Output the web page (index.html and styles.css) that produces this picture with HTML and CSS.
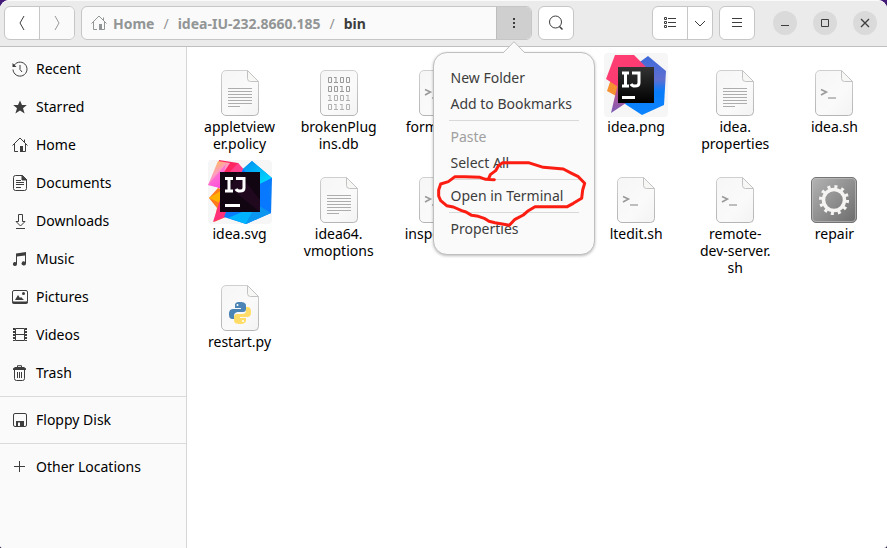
FILE: index.html
```html
<!DOCTYPE html>
<html lang="en">
<head>
<meta charset="utf-8">
<title>bin</title>
<link rel="stylesheet" href="styles.css">
</head>
<body>
<svg class="defs" aria-hidden="true">
  <defs>
    <linearGradient id="paper" x1="0" y1="0" x2="1" y2="1"><stop offset="0" stop-color="#f6f6f6"/><stop offset=".6" stop-color="#fafafa"/><stop offset="1" stop-color="#f3f3f3"/></linearGradient>
    <linearGradient id="edge" x1="0" y1="0" x2="0" y2="1"><stop offset="0" stop-color="#cfcfcf"/><stop offset="1" stop-color="#b5b5b5"/></linearGradient>
    <linearGradient id="metal" x1="0" y1="0" x2="1" y2="1"><stop offset="0" stop-color="#b4b4b4"/><stop offset="1" stop-color="#6c6c6c"/></linearGradient>
    <linearGradient id="blue" x1="0" y1="0" x2="0" y2="1"><stop offset="0" stop-color="#3f6bdb"/><stop offset=".4" stop-color="#5f6fd0"/><stop offset=".6" stop-color="#087cfa"/><stop offset="1" stop-color="#0b84ff"/></linearGradient>
    <linearGradient id="pink" x1="0" y1="0" x2="1" y2="1"><stop offset="0" stop-color="#ff3f74"/><stop offset=".5" stop-color="#fd3b72"/><stop offset="1" stop-color="#b75596"/></linearGradient>
    <linearGradient id="tile" x1="0" y1="0" x2="0" y2="1"><stop offset="0" stop-color="#333"/><stop offset="1" stop-color="#000"/></linearGradient>
    <linearGradient id="plum" x1="0" y1="0" x2="0" y2="1"><stop offset="0" stop-color="#e0507a"/><stop offset="1" stop-color="#7b5bb8"/></linearGradient>
    <linearGradient id="sun" x1="0" y1="0" x2=".6" y2="1"><stop offset="0" stop-color="#ffc72c"/><stop offset=".5" stop-color="#ff9dc0"/><stop offset="1" stop-color="#ff3fe8"/></linearGradient>
    <linearGradient id="cyan" x1="0" y1="0" x2="1" y2="1"><stop offset="0" stop-color="#008cf0"/><stop offset="1" stop-color="#00e5ff"/></linearGradient>
    <symbol id="home" viewBox="0 0 16 16"><path d="M.5 8.500 8 1l7.500 7.500M2.500 7v7.500h3.500M13.500 7v7.500h-3M12.500 2.500v3" fill="none" stroke="currentColor"/><path d="M8 9h3v6H8z" fill="currentColor"/></symbol>
    <symbol id="page" viewBox="0 0 48 48"><path d="M10 1.500h21l11.500 11.500v29.500a4 4 0 0 1-4 4h-28.500a4.500 4.500 0 0 1-4.500-4.500v-36a4.500 4.500 0 0 1 4.500-4.500z" fill="url(#paper)" stroke="url(#edge)"/><path d="M31.500 1.500v8a3 3 0 0 0 3 3h8z" fill="#f7f7f5" stroke="#c2c2c2"/></symbol>
    <symbol id="text" viewBox="0 0 48 48"><use href="#page"/><path d="M12 19.500h24M12 22.500h24M12 25.500h24M12 28.500h24M12 31.500h24M12 34.500h24M12 37.500h12" stroke="#adadad"/></symbol>
    <symbol id="shell" viewBox="0 0 48 48"><use href="#page"/><path d="m11 20.500 5.500 2.500-5.500 3" fill="none" stroke="#999" stroke-width="1.500"/><path d="M18 29h8" stroke="#aaa" stroke-width="1.500"/></symbol>
    <symbol id="zero" viewBox="0 0 4 6"><path d="M.5.5h3v5h-3z" fill="none" stroke="currentColor"/></symbol>
    <symbol id="one" viewBox="0 0 4 6"><path d="M0 .5h2.500M2 .5v5M0 5.500h4" fill="none" stroke="currentColor"/></symbol>
    <symbol id="idea" viewBox="0 0 64 64"><rect width="64" height="64" rx="4" fill="#f6f6f6"/><path d="M7 26h14v22L3 38z" fill="#f59130"/><path d="M33 11 44 3l18 15-2 34-22 10-20-13z" fill="url(#blue)"/><path d="M11 2h19l12 12-20 25L2 26z" fill="url(#pink)"/><path d="m7 60 8-34 10 22z" fill="url(#plum)"/><path d="M14 14h36v36H14z" fill="url(#tile)"/><path d="M18 20h7M18 33h7M21.500 20v13M28 20h7v10q0 3-4 3-3 0-4-2" fill="none" stroke="#fff" stroke-width="3"/><path d="M18 43h13v3H18z" fill="#fff"/></symbol>
  </defs>
</svg>
<div class="window">
  <header class="bar">
    <div class="group nav">
      <button type="button" aria-label="Back"><svg width="16" height="16"><path d="M10 1 6 8l4 7" fill="none" stroke="currentColor"/></svg></button>
      <button type="button" class="off" aria-label="Forward"><svg width="16" height="16"><path d="m6 1 4 7-4 7" fill="none" stroke="currentColor"/></svg></button>
    </div>
    <div class="group path">
      <nav class="crumbs" aria-label="Path">
        <a href="#"><svg width="16" height="16"><use href="#home"/></svg>Home</a><span>/</span><a href="#">idea-IU-232.8660.185</a><span>/</span><a href="#" class="here">bin</a>
      </nav>
      <div class="anchor">
        <button type="button" class="active" aria-label="Folder menu"><svg width="16" height="16"><path d="M7 3h2v2H7zM7 7h2v2H7zM7 11h2v2H7z" fill="currentColor"/></svg></button>
        <div class="popover">
          <svg class="tip" width="22" height="12"><path d="M0 12 11 .7 22 12" fill="#fafafa" stroke="#bfbfbf"/></svg>
          <button type="button">New Folder</button>
          <button type="button">Add to Bookmarks</button>
          <hr>
          <button type="button" disabled>Paste</button>
          <button type="button">Select All</button>
          <hr>
          <button type="button">Open in Terminal</button>
          <hr>
          <button type="button">Properties</button>
          <svg class="scribble" viewBox="45 90 459 204" width="153" height="68"><path d="M223 149 197 148 180 142 135 140 105 140 85 155 62 162 56 180 56 198 62 212 80 227 100 231 125 242 138 246 155 256 175 259 195 266 207 274 225 278 268 286 285 268 310 255 325 242 345 230 442 230 460 220 485 205 488 180 494 160 475 140 455 130 430 117 370 112 325 98 248 98 235 108 227 122 211 134 206 146"/></svg>
        </div>
      </div>
    </div>
    <div class="group"><button type="button" aria-label="Search"><svg width="16" height="16"><circle cx="7.500" cy="7" r="6" fill="none" stroke="currentColor"/><path d="m11.500 11.500 3 3" stroke="currentColor" stroke-width="1.500"/></svg></button></div>
    <div class="group view">
      <button type="button" aria-label="List view"><svg width="16" height="16"><path d="M2.500 2.500h2v2h-2zM2.500 6.500h2v2h-2zM2.500 10.500h2v2h-2zM6 3.500h8M6 7.500h8M6 11.500h8" fill="none" stroke="currentColor"/></svg></button>
      <button type="button" class="slim" aria-label="View options"><svg width="16" height="16"><path d="m3 6 5 5 5-5" fill="none" stroke="currentColor"/></svg></button>
    </div>
    <div class="group"><button type="button" aria-label="Main menu"><svg width="16" height="16"><path d="M3 3.500h10M3 7.500h10M3 11.500h10" stroke="currentColor"/></svg></button></div>
    <div class="controls">
      <button type="button" aria-label="Minimize"><svg width="16" height="16"><path d="M4 10.500h8" stroke="currentColor"/></svg></button>
      <button type="button" aria-label="Maximize"><svg width="16" height="16"><path d="M4.500 4.500h7v7h-7z" fill="none" stroke="currentColor"/></svg></button>
      <button type="button" aria-label="Close"><svg width="16" height="16"><path d="m4 4 8 8M12 4l-8 8" stroke="currentColor" stroke-width="1.300"/></svg></button>
    </div>
  </header>
  <div class="body">
    <nav class="side" aria-label="Places">
      <a href="#"><svg width="16" height="16" fill="none" stroke="currentColor"><path d="M1.500 5.500A7 7 0 1 1 1 8.500M8 4v4.500l2 2.500"/><path d="M.5 2v4h4z" fill="currentColor" stroke="none"/></svg>Recent</a>
      <a href="#"><svg width="16" height="16" fill="currentColor"><path d="m8 1.500 2 4.500h4.800L11 9.300l1.600 5.200L8 11.500l-4.600 3L5 9.300 1.200 6H6z"/></svg>Starred</a>
      <a href="#"><svg width="16" height="16"><use href="#home"/></svg>Home</a>
      <a href="#"><svg width="16" height="16" fill="none" stroke="currentColor"><path d="M3.500.5h7l4 4v9a2 2 0 0 1-2 2h-9a2 2 0 0 1-2-2v-11a2 2 0 0 1 2-2zM4 5.500h5M4 7.500h8M4 9.500h8M4 12.500h5"/><path d="M10 .5v4.500h4.500z" fill="currentColor"/></svg>Documents</a>
      <a href="#"><svg width="16" height="16" fill="none" stroke="currentColor"><path d="M6.500 1.500h4v7h2.500l-4.500 4.500-4.500-4.500h2.500zM4 15.500h9"/></svg>Downloads</a>
      <a href="#"><svg width="16" height="16" fill="currentColor"><path d="M4 2.500 14 1v11.500a2.200 2 0 1 1-1-1.700V4.500L5 5.500V13a2 2 0 1 1-1-1.700z"/></svg>Music</a>
      <a href="#"><svg width="16" height="16" fill="none" stroke="currentColor"><rect x=".5" y="1.500" width="15" height="12" rx="1.500"/><path d="M.5 13h15v.5q0 1-1 1h-13q-1 0-1-1z" fill="currentColor"/><path d="m3 11 3-5 2 3 1-1 3 3z" fill="currentColor" stroke="none"/><circle cx="11.500" cy="4.500" r="1.500" fill="currentColor" stroke="none"/></svg>Pictures</a>
      <a href="#"><svg width="16" height="16" fill="none" stroke="currentColor"><path d="M3.500 1.500h9v12h-9zM3.500 7.500h9"/><path d="M2 1v13M14 1v13" stroke-width="2" stroke-dasharray="2 1"/></svg>Videos</a>
      <a href="#"><svg width="16" height="16" fill="none" stroke="currentColor"><path d="M2.500 5v8.500a2 2 0 0 0 2 2h6a2 2 0 0 0 2-2V5M5.500 7v6M7.500 7v6M9.500 7v6M5.500 3V.7h4V3"/><path d="M1 5V3.500l2-1.500h9l2 1.500V5z" fill="currentColor" stroke="none"/></svg>Trash</a>
      <hr>
      <a href="#"><svg width="16" height="16" fill="none" stroke="currentColor"><path d="M4 14.500H3a1.500 1.500 0 0 1-1.500-1.500V3A1.500 1.500 0 0 1 3 1.500h10A1.500 1.500 0 0 1 14.500 3v10a1.500 1.500 0 0 1-1.500 1.500h-1"/><path d="M4 9h8v6H4zM6 10.500v3.500h2v-3.500z" fill="currentColor" fill-rule="evenodd" stroke="none"/></svg>Floppy Disk</a>
      <hr>
      <a href="#"><svg width="16" height="16"><path d="M2 7.500h11M7.500 2v11" stroke="currentColor"/></svg>Other Locations</a>
    </nav>
    <main>
      <ul class="files">
        <li><svg width="48" height="48"><use href="#text"/></svg><span>appletview<wbr>er.policy</span></li>
        <li><svg width="48" height="48"><rect x="5.500" y="1.500" width="37" height="45" rx="4.500" fill="url(#paper)" stroke="url(#edge)"/><g color="#999"><use href="#zero" x="13" y="8" width="4" height="6"/><use href="#one" x="19" y="8" width="4" height="6"/><use href="#zero" x="25" y="8" width="4" height="6"/><use href="#zero" x="31" y="8" width="4" height="6"/><use href="#zero" x="13" y="17" width="4" height="6"/><use href="#zero" x="19" y="17" width="4" height="6"/><use href="#one" x="25" y="17" width="4" height="6"/><use href="#zero" x="31" y="17" width="4" height="6"/></g><g color="#b0b0b0"><use href="#one" x="13" y="26" width="4" height="6"/><use href="#zero" x="19" y="26" width="4" height="6"/><use href="#zero" x="25" y="26" width="4" height="6"/><use href="#one" x="31" y="26" width="4" height="6"/><use href="#zero" x="13" y="35" width="4" height="6"/><use href="#one" x="19" y="35" width="4" height="6"/><use href="#one" x="25" y="35" width="4" height="6"/><use href="#zero" x="31" y="35" width="4" height="6"/></g></svg><span>brokenPlug<wbr>ins.db</span></li>
        <li><svg width="48" height="48"><use href="#shell"/></svg><span>format.sh</span></li>
        <li></li>
        <li><svg width="64" height="64"><use href="#idea"/></svg><span>idea.png</span></li>
        <li><svg width="48" height="48"><use href="#text"/></svg><span>idea.<wbr>properties</span></li>
        <li><svg width="48" height="48"><use href="#shell"/></svg><span>idea.sh</span></li>
        <li><svg width="64" height="64"><rect width="64" height="64" rx="4" fill="#f6f6f6"/><path d="M1 38 10 28l16 8-6 20-14 6 3-14z" fill="#ff7a1a"/><path d="M1 38 14 30v14z" fill="#ffb000"/><path d="M5 62 12 40l18 12z" fill="#ff2f7a"/><path d="M11 0 30 3l12 16-10 12-22-3z" fill="#ff2560"/><path d="M10 1 22 3l-6 9-4 16-12-3z" fill="url(#sun)"/><path d="m18 4-6 24-12-3z" fill="#ff55d8" opacity=".6"/><path d="M30 3 20 14l22 2z" fill="#ff3f8c"/><path d="m35 9 9-8 20 17-1 35-25 11-22-7z" fill="#087cfa"/><path d="m35 9 9-8 20 17-14 7z" fill="url(#cyan)"/><path d="m50 25 14-7-4 10 3 25-13-6z" fill="#0878ff"/><path d="m20 58 18 6 10-18z" fill="#00b4ff"/><path d="M38 64 48 44l15 9z" fill="#0a95ef"/><path d="M12 12h40v40H12z" fill="#120512"/><path d="m30 12 22 28v12L22 28z" fill="#2a0a28" opacity=".6"/><path d="M17 18.500h8M17 31h8M21 18v13M28 18.500h8V28q0 3-4 3-3 0-4-2" fill="none" stroke="#fff" stroke-width="3"/><path d="M17 44h15v3H17z" fill="#fff"/></svg><span>idea.svg</span></li>
        <li><svg width="48" height="48"><use href="#text"/></svg><span>idea64.<wbr>vmoptions</span></li>
        <li><svg width="48" height="48"><use href="#shell"/></svg><span>inspect.sh</span></li>
        <li></li>
        <li><svg width="48" height="48"><use href="#shell"/></svg><span>ltedit.sh</span></li>
        <li><svg width="48" height="48"><use href="#shell"/></svg><span>remote-dev-server.<wbr>sh</span></li>
        <li><svg width="48" height="48"><rect x="1.500" y="1.500" width="45" height="45" rx="4.500" fill="url(#metal)" stroke="#747474"/><rect x="2.500" y="2.500" width="43" height="43" rx="3.500" fill="none" stroke="#c4c4c4" opacity=".6"/><circle cx="24" cy="24" r="10.500" fill="none" stroke="#f5f4f2" stroke-width="3.500"/><circle cx="24" cy="24" r="13.300" fill="none" stroke="#f5f4f2" stroke-width="3.500" stroke-dasharray="3 3.964"/></svg><span>repair</span></li>
        <li><svg width="48" height="48"><use href="#page"/><path d="M24 18c-5 0-5 2-5 4v2h6v1h-8c-4 0-4 4-4 5s0 5 3 5h2v-3c0-3 2-4 4-4h5c2 0 3-1 3-3v-3c0-3-2-4-6-4z" fill="#4b84b5"/><path d="M24 40c5 0 6-2 6-4v-2h-6v-1h8c3 0 3-4 3-5s0-5-3-5h-2v3c0 3-1 4-4 4h-5c-2 0-3 1-3 3v3c0 3 2 4 6 4z" fill="#ffdc68"/><circle cx="21.500" cy="21" r="1" fill="#fff"/><circle cx="27" cy="37" r="1" fill="#fff"/></svg><span>restart.py</span></li>
      </ul>
    </main>
  </div>
</div>
</body>
</html>
```
FILE: styles.css
```css
* { box-sizing: border-box; }

body {
  margin: 0;
  background: linear-gradient(#431a78, #1d1038);
  color: #000;
  font: 14px/17px "Noto Sans", "Open Sans", sans-serif;
}

svg { display: block; flex: none; }
.defs { position: absolute; width: 0; height: 0; }
button { font: inherit; color: #3d3d3d; border: 0; padding: 0; margin: 0; background: none; }
a { color: inherit; text-decoration: none; }

.window {
  display: flex;
  flex-direction: column;
  min-height: 100vh;
  border-radius: 9px 9px 3px 3px;
  background: #fff;
}

.bar {
  display: flex;
  align-items: center;
  gap: 6px;
  padding: 5px 10px 6px 4px;
  background: #ebebeb;
  border-top: 1px solid #fafafa;
  border-bottom: 1px solid #bfbfbf;
  border-radius: 9px 9px 0 0;
}

.group {
  display: flex;
  height: 34px;
  border: 1px solid #c6c6c6;
  border-radius: 6px;
  background: #fff;
}
.group > button, .anchor > button {
  display: grid;
  place-items: center;
  width: 34px;
  height: 32px;
}
.group > button + button { border-left: 1px solid #c6c6c6; width: 35px; }
.group > button.slim { width: 25px; }
.group > .off { color: #999; background: #fafafa; border-radius: 0 5px 5px 0; }

.path { flex: 0 1 451px; background: #fafafa; }
.crumbs {
  flex: 1;
  display: flex;
  align-items: center;
  gap: 9px;
  padding-left: 9px;
  color: #929595;
  font-weight: bold;
  white-space: nowrap;
}
.crumbs a { display: flex; align-items: center; gap: 6px; }
.crumbs span { font-weight: normal; }
.crumbs .here { color: #3d3d3d; }
.anchor { position: relative; }
.anchor > .active { width: 35px; background: #cfcfcf; border-left: 1px solid #bdbdbd; border-radius: 0 5px 5px 0; }

.view { margin-left: auto; }

.controls { display: flex; gap: 16px; margin-left: 12px; }
.controls button { display: grid; place-items: center; width: 24px; height: 24px; border-radius: 50%; background: #dadada; }

.popover {
  position: absolute;
  z-index: 1;
  top: 45px;
  left: 50%;
  transform: translateX(-50%);
  width: 162px;
  padding: 12px 15px;
  background: #fafafa;
  border: 1px solid #bfbfbf;
  border-radius: 14px;
  box-shadow: 0 1px 3px #0004;
}
.popover button { display: block; width: 100%; height: 26px; padding: 0 0 2px 2px; text-align: left; white-space: nowrap; }
.popover button:disabled { color: #a0a0a0; }
.popover hr { height: 1px; margin: 3px 0; border: 0; background: #d9d9d9; }
.tip { position: absolute; top: -12px; left: 69px; }
.scribble { position: absolute; top: 107px; left: 1px; }
.scribble path { fill: none; stroke: #fb1d12; stroke-width: 9; stroke-linejoin: round; stroke-linecap: round; }

.body { flex: 1; display: flex; }

.side {
  flex: 0 0 187px;
  padding-top: 3px;
  background: #fafafa;
  border-right: 1px solid #d6d6d6;
  border-radius: 0 0 0 3px;
}
.side a { display: flex; align-items: center; gap: 8px; height: 38px; padding: 0 0 2px 12px; }
.side svg { margin-top: 2px; color: #3d3d3d; }
.side hr { height: 1px; margin: 4px 0; border: 0; background: #dadada; }

main { flex: 1; padding: 6px 3px; }
.files {
  display: grid;
  grid-template-columns: repeat(auto-fill, minmax(99px, 1fr));
  margin: 0;
  padding: 0;
  list-style: none;
}
.files li {
  display: grid;
  grid-row: span 2;
  grid-template-rows: subgrid;
  justify-items: center;
  align-items: end;
}
.files span { align-self: start; width: 76px; padding: 1px 0 8px; text-align: center; }
```
